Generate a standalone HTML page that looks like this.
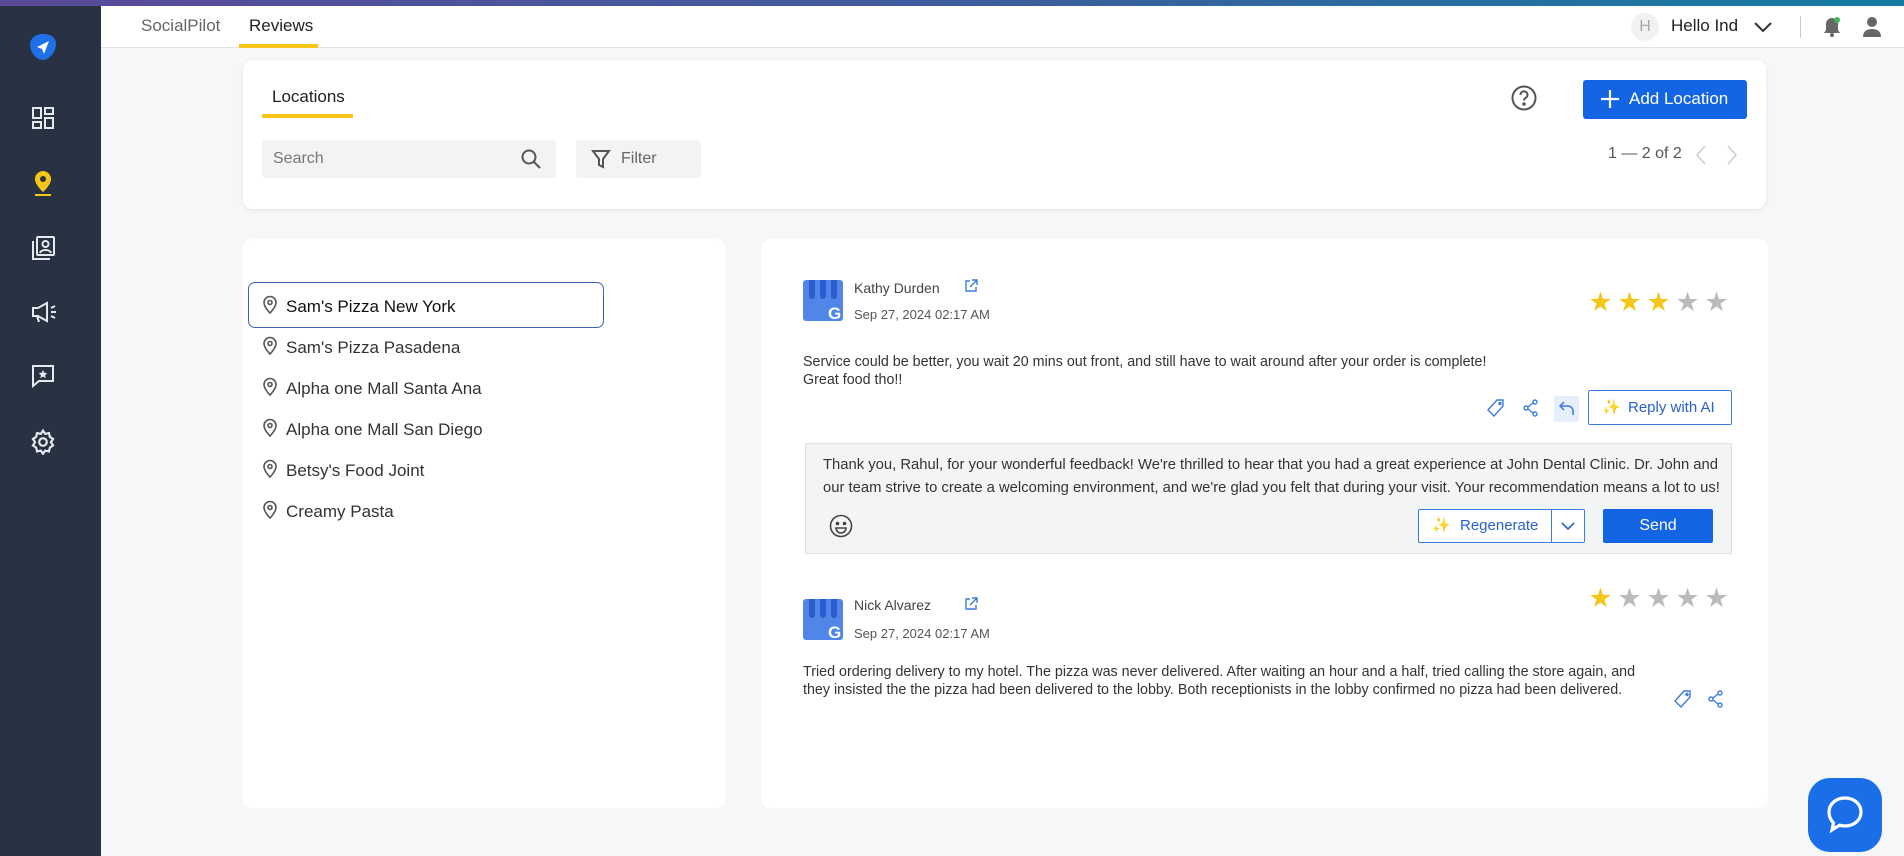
<!DOCTYPE html>
<html><head><meta charset="utf-8"><style>
*{box-sizing:border-box;margin:0;padding:0}
body{width:1904px;height:856px;overflow:hidden;background:#f6f7f8;font-family:"Liberation Sans",sans-serif;position:relative;color:#222}
.abs{position:absolute}
.top{left:0;top:0;width:1904px;height:6px;background:linear-gradient(90deg,#5a4a9a,#3f5c9f 50%,#137ca0)}
.side{left:0;top:6px;width:101px;height:850px;background:#283242}
.hdr{left:101px;top:6px;width:1803px;height:42px;background:#fff;border-bottom:1px solid #dfe1e3}
.card{background:#fff;border-radius:10px}
.t{position:absolute;white-space:nowrap}
.ico{position:absolute}
.st span{display:inline-block;width:29px;text-align:center}
</style></head><body>
<div class="abs top"></div>
<div class="abs side"></div>
<svg class="ico" style="left:28px;top:32px" width="30" height="30" viewBox="0 0 30 30"><path d="M15 2C22 2 28 5 28 12c0 8-7 16-13 16S2 21 2 13C2 6 8 2 15 2z" fill="#1f6fe8"/><path d="M9 15l12-6-5 13-2-5z" fill="#fff"/></svg>
<svg class="ico" style="left:31px;top:106px" width="24" height="24" viewBox="0 0 24 24" fill="none" stroke="#e6e9ee" stroke-width="2"><rect x="2" y="2" width="8" height="10"/><rect x="14" y="2" width="8" height="6"/><rect x="2" y="16" width="8" height="6"/><rect x="14" y="12" width="8" height="10"/></svg>
<svg class="ico" style="left:32px;top:170px" width="22" height="26" viewBox="0 0 22 26"><path d="M11 1a8 8 0 0 0-8 8c0 6 8 13 8 13s8-7 8-13a8 8 0 0 0-8-8z" fill="#f5c518"/><circle cx="11" cy="9" r="3" fill="#283242"/><rect x="3" y="24" width="16" height="2" fill="#f5c518"/></svg>
<svg class="ico" style="left:30px;top:235px" width="26" height="26" viewBox="0 0 26 26" fill="none" stroke="#e6e9ee" stroke-width="2"><rect x="7" y="2" width="17" height="18" rx="1"/><path d="M3 6v18h17"/><circle cx="15.5" cy="9" r="3"/><path d="M10 18c1-4 10-4 11 0"/></svg>
<svg class="ico" style="left:30px;top:300px" width="28" height="24" viewBox="0 0 28 24" fill="none" stroke="#e6e9ee" stroke-width="2"><path d="M3 8h5l9-5v18l-9-5H3z"/><path d="M7 16l2 6"/><path d="M21 8l4-2M21 12h5M21 16l4 2"/></svg>
<svg class="ico" style="left:31px;top:364px" width="24" height="24" viewBox="0 0 24 24" fill="none" stroke="#e6e9ee" stroke-width="2"><path d="M2 2h20v15H8l-6 5z"/><path d="M12 6l1.3 2.7 3 .4-2.2 2 .6 3-2.7-1.5-2.7 1.5.6-3-2.2-2 3-.4z" fill="#e6e9ee" stroke="none"/></svg>
<svg class="ico" style="left:30px;top:429px" width="26" height="26" viewBox="0 0 24 24" fill="none" stroke="#e6e9ee" stroke-width="2"><circle cx="12" cy="12" r="3.5"/><path d="M12 1.5l2 3 3.5-.8.8 3.5 3 2-2 3 2 3-3 2-.8 3.5-3.5-.8-2 3-2-3-3.5.8-.8-3.5-3-2 2-3-2-3 3-2 .8-3.5 3.5.8z"/></svg>

<div class="abs hdr"></div>
<div class="t" style="left:141px;top:16px;font-size:17px;color:#666">SocialPilot</div>
<div class="t" style="left:249px;top:16px;font-size:17px;color:#222">Reviews</div>
<div class="abs" style="left:239px;top:44px;width:79px;height:4px;background:#f5c518"></div>
<div class="abs" style="left:1631px;top:13px;width:28px;height:28px;border-radius:50%;background:#f0f1f3;color:#aaa;font-size:16px;text-align:center;line-height:28px">H</div>
<div class="t" style="left:1671px;top:16px;font-size:17px;color:#222">Hello Ind</div>
<svg class="ico" style="left:1753px;top:20px" width="20" height="14" viewBox="0 0 20 14" fill="none" stroke="#333" stroke-width="2"><path d="M2 3l8 8 8-8"/></svg>
<div class="abs" style="left:1800px;top:16px;width:1px;height:22px;background:#ccc"></div>
<svg class="ico" style="left:1822px;top:16px" width="20" height="22" viewBox="0 0 20 22"><path d="M10 2a6 6 0 0 0-6 6v6l-2 3h16l-2-3V8a6 6 0 0 0-6-6z" fill="#666"/><circle cx="10" cy="19" r="2" fill="#666"/><circle cx="15" cy="4" r="3" fill="#3cb55a"/></svg>
<svg class="ico" style="left:1863px;top:16px" width="18" height="22" viewBox="0 0 18 22" fill="#666"><circle cx="9" cy="6" r="5"/><path d="M0 21c0-6 4-8 9-8s9 2 9 8z"/></svg>

<div class="abs card" style="left:243px;top:60px;width:1523px;height:149px;box-shadow:0 1px 4px rgba(0,0,0,.08)"></div>
<div class="t" style="left:272px;top:87px;font-size:17px;color:#222">Locations</div>
<div class="abs" style="left:262px;top:114px;width:91px;height:4px;background:#f5c518"></div>
<div class="abs" style="left:262px;top:140px;width:294px;height:38px;background:#f2f3f4;border-radius:3px"></div>
<div class="t" style="left:273px;top:150px;font-size:16px;color:#777">Search</div>
<svg class="ico" style="left:520px;top:148px" width="22" height="22" viewBox="0 0 22 22" fill="none" stroke="#555" stroke-width="2"><circle cx="9" cy="9" r="6.5"/><path d="M14 14l6 6"/></svg>
<div class="abs" style="left:576px;top:140px;width:125px;height:38px;background:#f2f3f4;border-radius:3px"></div>
<svg class="ico" style="left:591px;top:149px" width="20" height="20" viewBox="0 0 20 20" fill="none" stroke="#555" stroke-width="2"><path d="M2 2h16l-6 8v8l-4-2v-6z"/></svg>
<div class="t" style="left:621px;top:150px;font-size:16px;color:#666">Filter</div>
<svg class="ico" style="left:1511px;top:85px" width="26" height="26" viewBox="0 0 26 26" fill="none" stroke="#555" stroke-width="2"><circle cx="13" cy="13" r="11.5"/><path d="M9.5 10a3.5 3.5 0 1 1 5 3c-1.2.6-1.5 1.3-1.5 2.5" /><circle cx="13" cy="19" r=".8" fill="#555"/></svg>
<div class="abs" style="left:1583px;top:80px;width:164px;height:39px;background:#1465e3;border-radius:3px"></div>
<svg class="ico" style="left:1600px;top:89px" width="20" height="20" viewBox="0 0 20 20" stroke="#fff" stroke-width="2.2"><path d="M10 1v18M1 10h18"/></svg>
<div class="t" style="left:1629px;top:89px;font-size:17px;color:#fff">Add Location</div>
<div class="t" style="left:1608px;top:145px;font-size:16px;color:#555">1 — 2 of 2</div>
<svg class="ico" style="left:1694px;top:144px" width="14" height="22" viewBox="0 0 14 22" fill="none" stroke="#ccc" stroke-width="1.5"><path d="M11 2L3 11l8 9"/></svg>
<svg class="ico" style="left:1725px;top:144px" width="14" height="22" viewBox="0 0 14 22" fill="none" stroke="#ccc" stroke-width="1.5"><path d="M3 2l8 9-8 9"/></svg>

<div class="abs card" style="left:243px;top:239px;width:482px;height:569px"></div>
<div class="abs" style="left:248px;top:282px;width:356px;height:46px;border:1px solid #3e63b8;border-radius:7px"></div>
<div style="position:absolute;left:262px;top:286px;font-size:17px;color:#333;line-height:41.1px">
<div><svg width="16" height="20" viewBox="0 0 16 20" fill="none" stroke="#555" stroke-width="1.6" style="vertical-align:-3px;margin-right:8px"><path d="M8 1.5a6 6 0 0 0-6 6c0 4.5 6 10.5 6 10.5s6-6 6-10.5a6 6 0 0 0-6-6z"/><circle cx="8" cy="7.5" r="2"/></svg><span style="color:#111">Sam's Pizza New York</span></div>
<div><svg width="16" height="20" viewBox="0 0 16 20" fill="none" stroke="#555" stroke-width="1.6" style="vertical-align:-3px;margin-right:8px"><path d="M8 1.5a6 6 0 0 0-6 6c0 4.5 6 10.5 6 10.5s6-6 6-10.5a6 6 0 0 0-6-6z"/><circle cx="8" cy="7.5" r="2"/></svg>Sam's Pizza Pasadena</div>
<div><svg width="16" height="20" viewBox="0 0 16 20" fill="none" stroke="#555" stroke-width="1.6" style="vertical-align:-3px;margin-right:8px"><path d="M8 1.5a6 6 0 0 0-6 6c0 4.5 6 10.5 6 10.5s6-6 6-10.5a6 6 0 0 0-6-6z"/><circle cx="8" cy="7.5" r="2"/></svg>Alpha one Mall Santa Ana</div>
<div><svg width="16" height="20" viewBox="0 0 16 20" fill="none" stroke="#555" stroke-width="1.6" style="vertical-align:-3px;margin-right:8px"><path d="M8 1.5a6 6 0 0 0-6 6c0 4.5 6 10.5 6 10.5s6-6 6-10.5a6 6 0 0 0-6-6z"/><circle cx="8" cy="7.5" r="2"/></svg>Alpha one Mall San Diego</div>
<div><svg width="16" height="20" viewBox="0 0 16 20" fill="none" stroke="#555" stroke-width="1.6" style="vertical-align:-3px;margin-right:8px"><path d="M8 1.5a6 6 0 0 0-6 6c0 4.5 6 10.5 6 10.5s6-6 6-10.5a6 6 0 0 0-6-6z"/><circle cx="8" cy="7.5" r="2"/></svg>Betsy's Food Joint</div>
<div><svg width="16" height="20" viewBox="0 0 16 20" fill="none" stroke="#555" stroke-width="1.6" style="vertical-align:-3px;margin-right:8px"><path d="M8 1.5a6 6 0 0 0-6 6c0 4.5 6 10.5 6 10.5s6-6 6-10.5a6 6 0 0 0-6-6z"/><circle cx="8" cy="7.5" r="2"/></svg>Creamy Pasta</div>
</div>

<div class="abs card" style="left:761px;top:239px;width:1007px;height:569px"></div>

<svg class="ico" style="left:803px;top:280px" width="40" height="41" viewBox="0 0 40 41"><rect width="40" height="41" rx="3" fill="#4f86e8"/><path d="M6 0h6v16a3 3 0 0 1-6 0zM17 0h6v16a3 3 0 0 1-6 0zM28 0h6v16a3 3 0 0 1-6 0z" fill="#2d5ccc"/><text x="25" y="39" font-size="17" font-weight="bold" fill="#fff" font-family="Liberation Sans">G</text></svg>
<div class="t" style="left:854px;top:280px;font-size:14px;color:#444">Kathy Durden</div>
<svg class="ico" style="left:964px;top:279px" width="14" height="14" viewBox="0 0 14 14" fill="none" stroke="#3b7be0" stroke-width="1.4"><path d="M6 2H2v10h10V8M8 1h5v5M13 1L6 8"/></svg>
<div class="t" style="left:854px;top:307px;font-size:13px;color:#555">Sep 27, 2024 02:17 AM</div>
<div class="t st" style="left:1586px;top:288px;font-size:27px;line-height:28px"><span style="color:#f5c518">★</span><span style="color:#f5c518">★</span><span style="color:#f5c518">★</span><span style="color:#bbb">★</span><span style="color:#bbb">★</span></div>
<div class="t" style="left:803px;top:353px;font-size:14.3px;color:#333;line-height:18px">Service could be better, you wait 20 mins out front, and still have to wait around after your order is complete!<br>Great food tho!!</div>
<svg class="ico" style="left:1487px;top:399px" width="18" height="18" viewBox="0 0 18 18" fill="none" stroke="#3b7be0" stroke-width="1.4"><path d="M10 1h6v6l-9 10-6-6z"/><circle cx="13" cy="4.5" r="1"/></svg>
<svg class="ico" style="left:1523px;top:399px" width="16" height="18" viewBox="0 0 16 18" fill="none" stroke="#3b7be0" stroke-width="1.4"><circle cx="12" cy="3" r="2"/><circle cx="3" cy="9" r="2"/><circle cx="12" cy="15" r="2"/><path d="M5 8l5-4M5 10l5 4"/></svg>
<div class="abs" style="left:1554px;top:396px;width:25px;height:26px;background:#e6eefb;border-radius:2px"></div>
<svg class="ico" style="left:1558px;top:400px" width="17" height="17" viewBox="0 0 17 17" fill="none" stroke="#3b7be0" stroke-width="1.5"><path d="M6 2L2 6l4 4M2 6h8a5 5 0 0 1 5 5v4"/></svg>
<div class="abs" style="left:1588px;top:390px;width:144px;height:35px;border:1px solid #3b7be0;border-radius:2px;background:#fff"></div>
<div class="t" style="left:1602px;top:398px;font-size:15px;color:#f5b800">✨</div>
<div class="t" style="left:1628px;top:399px;font-size:15px;color:#2a62c9">Reply with AI</div>

<div class="abs" style="left:805px;top:443px;width:927px;height:111px;background:#f3f5f5;border:1px solid #dde0e2"></div>
<div class="t" style="left:823px;top:454px;font-size:14.8px;color:#333;line-height:23px">Thank you, Rahul, for your wonderful feedback! We're thrilled to hear that you had a great experience at John Dental Clinic. Dr. John and<br>our team strive to create a welcoming environment, and we're glad you felt that during your visit. Your recommendation means a lot to us!</div>
<svg class="ico" style="left:829px;top:514px" width="24" height="24" viewBox="0 0 24 24" fill="none" stroke="#444" stroke-width="1.6"><circle cx="12" cy="12" r="10.5"/><circle cx="8.5" cy="9.5" r="1" fill="#444"/><circle cx="15.5" cy="9.5" r="1" fill="#444"/><path d="M7 14h10a5 5 0 0 1-10 0z"/></svg>
<div class="abs" style="left:1418px;top:509px;width:167px;height:34px;border:1px solid #3b7be0;border-radius:2px;background:#fff"></div>
<div class="abs" style="left:1551px;top:509px;width:1px;height:34px;background:#3b7be0"></div>
<div class="t" style="left:1432px;top:516px;font-size:15px;color:#f5b800">✨</div>
<div class="t" style="left:1460px;top:517px;font-size:15px;color:#2a62c9">Regenerate</div>
<svg class="ico" style="left:1560px;top:518px" width="16" height="16" viewBox="0 0 16 16" fill="none" stroke="#2a62c9" stroke-width="1.6"><path d="M2 5l6 6 6-6"/></svg>
<div class="abs" style="left:1603px;top:509px;width:110px;height:34px;background:#1465e3;border-radius:2px;color:#fff;font-size:16px;text-align:center;line-height:34px">Send</div>

<svg class="ico" style="left:803px;top:599px" width="40" height="41" viewBox="0 0 40 41"><rect width="40" height="41" rx="3" fill="#4f86e8"/><path d="M6 0h6v16a3 3 0 0 1-6 0zM17 0h6v16a3 3 0 0 1-6 0zM28 0h6v16a3 3 0 0 1-6 0z" fill="#2d5ccc"/><text x="25" y="39" font-size="17" font-weight="bold" fill="#fff" font-family="Liberation Sans">G</text></svg>
<div class="t" style="left:854px;top:597px;font-size:14px;color:#444">Nick Alvarez</div>
<svg class="ico" style="left:964px;top:597px" width="14" height="14" viewBox="0 0 14 14" fill="none" stroke="#3b7be0" stroke-width="1.4"><path d="M6 2H2v10h10V8M8 1h5v5M13 1L6 8"/></svg>
<div class="t" style="left:854px;top:626px;font-size:13px;color:#555">Sep 27, 2024 02:17 AM</div>
<div class="t st" style="left:1586px;top:584px;font-size:27px;line-height:28px"><span style="color:#f5c518">★</span><span style="color:#bbb">★</span><span style="color:#bbb">★</span><span style="color:#bbb">★</span><span style="color:#bbb">★</span></div>
<div class="t" style="left:803px;top:663px;font-size:14.3px;color:#333;line-height:18px">Tried ordering delivery to my hotel. The pizza was never delivered. After waiting an hour and a half, tried calling the store again, and<br>they insisted the the pizza had been delivered to the lobby. Both receptionists in the lobby confirmed no pizza had been delivered.</div>
<svg class="ico" style="left:1674px;top:690px" width="18" height="18" viewBox="0 0 18 18" fill="none" stroke="#3b7be0" stroke-width="1.4"><path d="M10 1h6v6l-9 10-6-6z"/><circle cx="13" cy="4.5" r="1"/></svg>
<svg class="ico" style="left:1708px;top:690px" width="16" height="18" viewBox="0 0 16 18" fill="none" stroke="#3b7be0" stroke-width="1.4"><circle cx="12" cy="3" r="2"/><circle cx="3" cy="9" r="2"/><circle cx="12" cy="15" r="2"/><path d="M5 8l5-4M5 10l5 4"/></svg>

<div class="abs" style="left:1808px;top:778px;width:74px;height:74px;border-radius:22px;background:#1a6fe8"></div>
<svg class="ico" style="left:1826px;top:795px" width="38" height="40" viewBox="0 0 38 40" fill="none" stroke="#fff" stroke-width="3.2"><path d="M19 3C28 3 35 9 35 17s-7 14-16 14c-2 0-4-.3-5.5-.8L6 35l1.5-7C4.5 25 3 21.5 3 17 3 9 10 3 19 3z"/></svg>
</body></html>
